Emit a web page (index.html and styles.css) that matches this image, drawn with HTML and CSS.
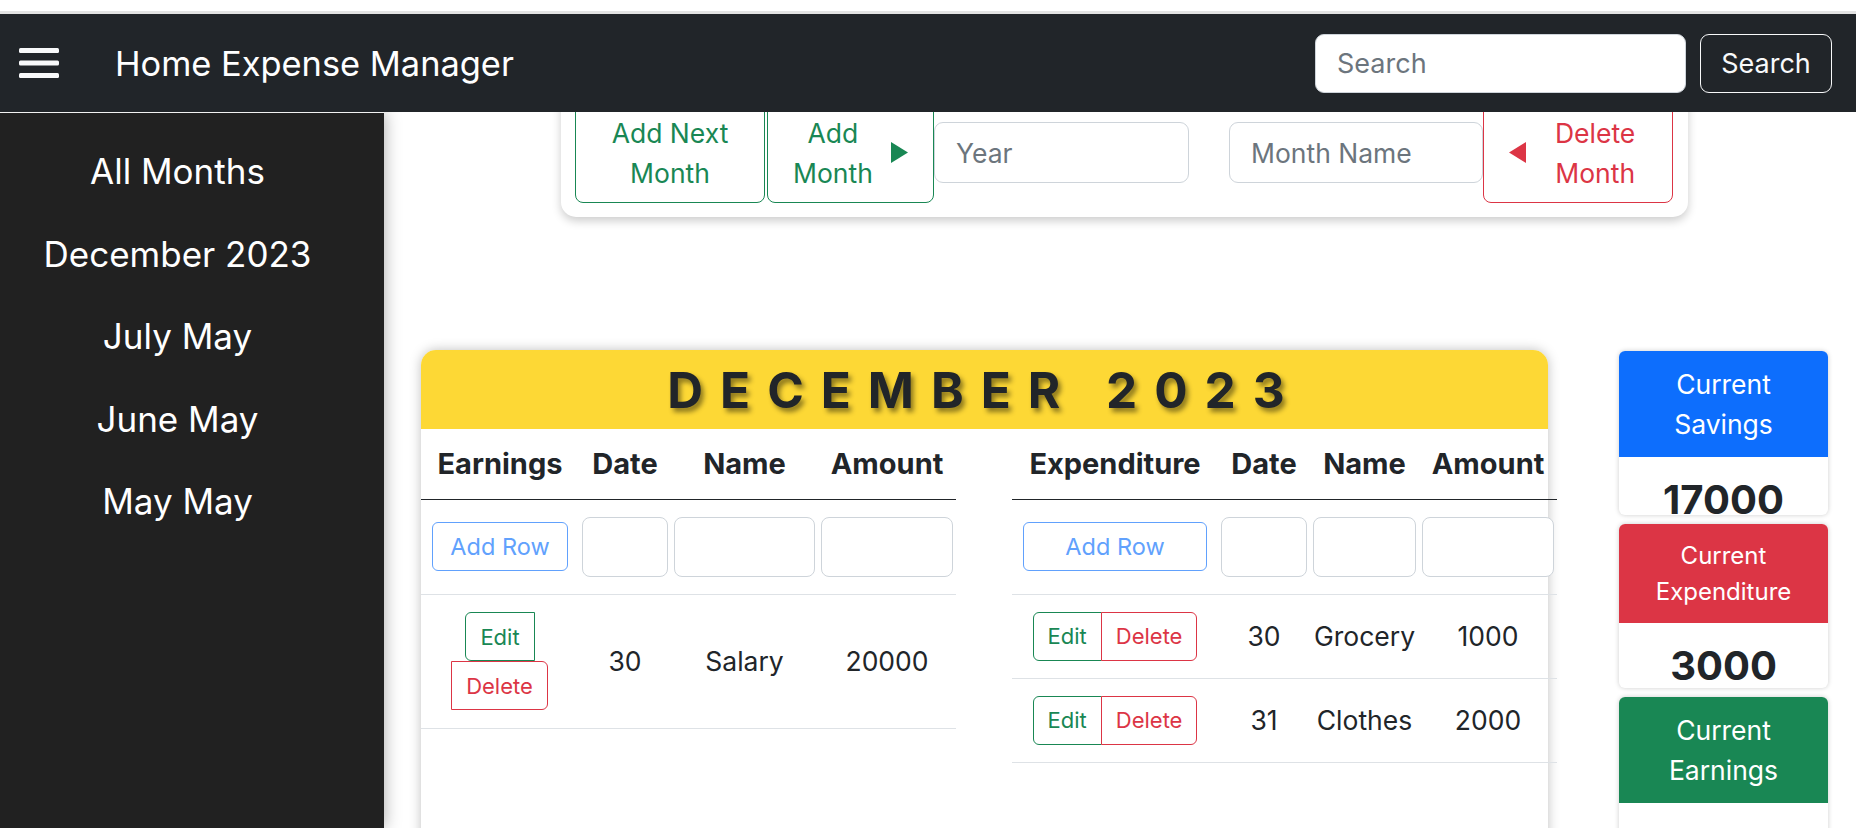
FILE: index.html
```html
<!DOCTYPE html>
<html lang="en">
<head>
<meta charset="utf-8">
<title>Home Expense Manager</title>
<link rel="stylesheet" href="styles.css">
</head>
<body>
<div class="topstrip"></div>
<nav class="navbar">
  <button class="menu-btn" type="button" aria-label="Menu">
    <svg width="40" height="30" viewBox="0 0 40 30" aria-hidden="true">
      <rect x="0" y="0" width="40" height="5" rx="1.5" fill="#f8f9fa"/>
      <rect x="0" y="12.5" width="40" height="5" rx="1.5" fill="#f8f9fa"/>
      <rect x="0" y="25" width="40" height="5" rx="1.5" fill="#f8f9fa"/>
    </svg>
  </button>
  <span class="brand">Home Expense Manager</span>
  <form class="search">
    <input class="search-input" type="text" placeholder="Search">
    <button class="search-btn" type="button">Search</button>
  </form>
</nav>
<div class="layout">
  <aside class="sidebar">
    <a class="side-link" href="#">All Months</a>
    <a class="side-link" href="#">December 2023</a>
    <a class="side-link" href="#">July May</a>
    <a class="side-link" href="#">June May</a>
    <a class="side-link" href="#">May May</a>
  </aside>
  <main class="main">
    <section class="toolbar">
      <button class="tb-btn btn-green next-month" type="button">Add Next<br>Month</button>
      <button class="tb-btn btn-green add-month" type="button">
        <span class="tb-text">Add<br>Month</span>
        <svg class="caret" width="17" height="21" viewBox="0 0 17 21" aria-hidden="true"><polygon points="0,0 17,10.5 0,21" fill="#198754"/></svg>
      </button>
      <input class="tb-input year-input" type="text" placeholder="Year">
      <input class="tb-input month-input" type="text" placeholder="Month Name">
      <button class="tb-btn btn-red delete-month" type="button">
        <svg class="caret" width="17" height="21" viewBox="0 0 17 21" aria-hidden="true"><polygon points="17,0 0,10.5 17,21" fill="#dc3545"/></svg>
        <span class="tb-text">Delete<br>Month</span>
      </button>
    </section>

    <div class="content-row">
      <section class="month-card">
        <header class="month-head">
          <h2 class="month-title">DECEMBER 2023</h2>
        </header>
        <div class="month-body">
          <table class="ledger ledger-earn">
            <colgroup><col class="ce-1"><col class="ce-2"><col class="ce-3"><col class="ce-4"></colgroup>
            <thead>
              <tr><th>Earnings</th><th>Date</th><th>Name</th><th>Amount</th></tr>
            </thead>
            <tbody>
              <tr class="input-row">
                <td class="first"><button class="btn-add" type="button">Add Row</button></td>
                <td><input class="cell-input" type="text"></td>
                <td><input class="cell-input" type="text"></td>
                <td><input class="cell-input" type="text"></td>
              </tr>
              <tr class="earn-row">
                <td class="first">
                  <div class="btn-group">
                    <button class="btn-sm btn-edit" type="button">Edit</button>
                    <button class="btn-sm btn-del" type="button">Delete</button>
                  </div>
                </td>
                <td>30</td>
                <td>Salary</td>
                <td>20000</td>
              </tr>
            </tbody>
          </table>

          <table class="ledger ledger-exp">
            <colgroup><col class="cx-1"><col class="cx-2"><col class="cx-3"><col class="cx-4"></colgroup>
            <thead>
              <tr><th>Expenditure</th><th>Date</th><th>Name</th><th>Amount</th></tr>
            </thead>
            <tbody>
              <tr class="input-row">
                <td class="first"><button class="btn-add" type="button">Add Row</button></td>
                <td><input class="cell-input" type="text"></td>
                <td><input class="cell-input" type="text"></td>
                <td><input class="cell-input" type="text"></td>
              </tr>
              <tr class="exp-row">
                <td class="first">
                  <div class="btn-group">
                    <button class="btn-sm btn-edit" type="button">Edit</button>
                    <button class="btn-sm btn-del" type="button">Delete</button>
                  </div>
                </td>
                <td>30</td>
                <td>Grocery</td>
                <td>1000</td>
              </tr>
              <tr class="exp-row">
                <td class="first">
                  <div class="btn-group">
                    <button class="btn-sm btn-edit" type="button">Edit</button>
                    <button class="btn-sm btn-del" type="button">Delete</button>
                  </div>
                </td>
                <td>31</td>
                <td>Clothes</td>
                <td>2000</td>
              </tr>
            </tbody>
          </table>
        </div>
      </section>

      <aside class="stats">
        <div class="stat">
          <div class="stat-head stat-blue">Current Savings</div>
          <div class="stat-value">17000</div>
        </div>
        <div class="stat">
          <div class="stat-head stat-red stat-small">Current Expenditure</div>
          <div class="stat-value">3000</div>
        </div>
        <div class="stat">
          <div class="stat-head stat-green">Current Earnings</div>
          <div class="stat-value">20000</div>
        </div>
      </aside>
    </div>
  </main>
</div>
</body>
</html>
```

FILE: styles.css
```css
* { box-sizing: border-box; }

html, body {
  margin: 0;
  height: 100%;
}

body {
  height: 828px;
  display: flex;
  flex-direction: column;
  overflow: hidden;
  background: #fff;
  color: #212529;
  font-family: Inter, "Noto Sans", "DejaVu Sans", sans-serif;
}

/* ---------- top strip + navbar ---------- */
.topstrip {
  flex: none;
  height: 14px;
  background: #fff;
  border-bottom: 3px solid #e3e3e3;
}

.navbar {
  flex: none;
  height: 98px;
  display: flex;
  align-items: center;
  padding: 0 24px 0 19px;
  background: #212529;
  position: relative;
  z-index: 3;
}

.menu-btn {
  display: flex;
  width: 40px;
  height: 30px;
  padding: 0;
  border: 0;
  background: none;
}

.brand {
  margin-left: 56px;
  color: #fff;
  font-size: 34.4px;
}

.search {
  margin: 0 0 0 auto;
  display: flex;
  align-items: center;
}

.search-input {
  width: 371px;
  height: 59px;
  padding: 0 21px;
  border: 1px solid #ced4da;
  border-radius: 9px;
  font: inherit;
  font-size: 27px;
  color: #212529;
  background: #fff;
}

.search-input::placeholder { color: #6c757d; }

.search-btn {
  margin-left: 14px;
  width: 132px;
  height: 59px;
  border: 1px solid #f8f9fa;
  border-radius: 9px;
  background: transparent;
  color: #f8f9fa;
  font: inherit;
  font-size: 27px;
}

/* ---------- layout ---------- */
.layout {
  flex: 1;
  min-height: 0;
  display: flex;
}

.sidebar {
  flex: none;
  width: 384px;
  display: flex;
  flex-direction: column;
  padding: 17px 29px 0 0;
  background: #212121;
  border-top: 1px solid #f2f2f2;
  box-shadow: 0 0 16px rgba(0, 0, 0, 0.35);
  position: relative;
  z-index: 2;
}

.side-link {
  display: block;
  line-height: 82.6px;
  text-align: center;
  color: #fff;
  font-size: 35px;
  text-decoration: none;
}

.main {
  flex: 1;
  min-width: 0;
  overflow: hidden;
  background: #fff;
}

/* ---------- toolbar card ---------- */
.toolbar {
  width: 1127px;
  margin: -19px 0 0 177px;
  display: flex;
  align-items: center;
  padding: 9px 14px 14px;
  background: #fff;
  border-radius: 0 0 15px 15px;
  box-shadow: 0 4px 10px rgba(0, 0, 0, 0.2);
}

.tb-btn {
  flex: none;
  height: 101px;
  display: flex;
  align-items: center;
  padding: 0;
  border: 1px solid;
  border-radius: 8px;
  background: #fff;
  font: inherit;
  font-size: 26.5px;
  line-height: 40px;
  text-align: center;
}

.btn-green { color: #198754; border-color: #198754; }
.btn-red { color: #dc3545; border-color: #dc3545; }

.next-month {
  width: 190px;
  justify-content: center;
}

.add-month {
  width: 167px;
  margin-left: 2px;
  padding: 0 25px;
  gap: 18px;
}

.delete-month {
  width: 190px;
  padding-left: 25px;
  gap: 29px;
}

.tb-text { display: block; }

.caret { flex: none; display: block; }

.tb-input {
  flex: none;
  height: 61px;
  padding: 0 21px;
  border: 1px solid #ced4da;
  border-radius: 9px;
  font: inherit;
  font-size: 26.5px;
  color: #212529;
}

.tb-input::placeholder { color: #6c757d; }

.year-input { width: 255px; }
.month-input { width: 254px; margin-left: 40px; }

/* ---------- content row ---------- */
.content-row {
  display: flex;
  align-items: flex-start;
  margin-top: 133px;
  padding-left: 37px;
}

.month-card {
  flex: none;
  width: 1127px;
  min-height: 620px;
  background: #fff;
  border-radius: 15px;
  box-shadow: 0 0 12px rgba(0, 0, 0, 0.25);
}

.month-head {
  height: 79px;
  display: flex;
  align-items: center;
  justify-content: center;
  background: #fdd835;
  border-radius: 15px 15px 0 0;
}

.month-title {
  margin: 0;
  font-size: 49.5px;
  font-weight: 700;
  letter-spacing: 17px;
  color: #212529;
  text-shadow: 3px 4px 5px rgba(0, 0, 0, 0.45);
}

.month-body {
  display: flex;
  align-items: flex-start;
}

/* ---------- ledgers ---------- */
.ledger {
  flex: none;
  border-collapse: collapse;
  table-layout: fixed;
}

.ledger-earn { width: 535px; }
.ledger-exp { width: 545px; margin-left: 56px; }

.ce-1 { width: 158px; }
.ce-2 { width: 92px; }
.ce-3 { width: 147px; }
.ce-4 { width: 138px; }

.cx-1 { width: 206px; }
.cx-2 { width: 92px; }
.cx-3 { width: 109px; }
.cx-4 { width: 138px; }

.ledger th {
  height: 70px;
  padding: 0;
  border-bottom: 1px solid #212529;
  font-size: 29px;
  font-weight: 700;
  text-align: center;
  white-space: nowrap;
}

.ledger td {
  padding: 0 3px;
  border-bottom: 1px solid #dee2e6;
  font-size: 26.5px;
  text-align: center;
  vertical-align: middle;
}

.ledger td.first { padding: 0 11px; }

.input-row td { height: 95px; }
.earn-row td { height: 134px; }
.exp-row td { height: 84px; }

.btn-add {
  display: block;
  width: 100%;
  height: 49px;
  padding: 0;
  border: 1px solid #61a1fd;
  border-radius: 6px;
  background: #fff;
  color: #61a1fd;
  font: inherit;
  font-size: 23.5px;
}

.cell-input {
  display: block;
  width: 100%;
  height: 60px;
  padding: 0 12px;
  border: 1px solid #ced4da;
  border-radius: 8px;
  font: inherit;
  font-size: 26.5px;
}

.btn-group {
  display: flex;
  flex-wrap: wrap;
  justify-content: center;
}

.btn-sm {
  height: 49px;
  padding: 0 14px;
  border: 1px solid;
  background: #fff;
  font: inherit;
  font-size: 22px;
}

.btn-edit {
  color: #198754;
  border-color: #198754;
  border-radius: 6px 0 0 6px;
}

.btn-del {
  color: #dc3545;
  border-color: #dc3545;
  border-radius: 0 6px 6px 0;
  margin-left: -1px;
}

/* ---------- stats ---------- */
.stats {
  flex: none;
  width: 209px;
  margin: 1px 0 0 71px;
  display: flex;
  flex-direction: column;
  gap: 9px;
}

.stat {
  height: 164px;
  overflow: hidden;
  background: #fff;
  border-radius: 6px;
  box-shadow: 0 0 5px rgba(0, 0, 0, 0.2);
  text-align: center;
}

.stat-head {
  padding: 13px 8px;
  color: #fff;
  font-size: 26.5px;
  line-height: 40px;
}

.stat-small {
  padding: 13.5px 8px;
  font-size: 24px;
  line-height: 36px;
}

.stat-blue { background: #0d6efd; }
.stat-red { background: #dc3545; }
.stat-green { background: #198754; }

.stat-value {
  padding-top: 18px;
  font-size: 40px;
  font-weight: 700;
  line-height: 49px;
}
```
